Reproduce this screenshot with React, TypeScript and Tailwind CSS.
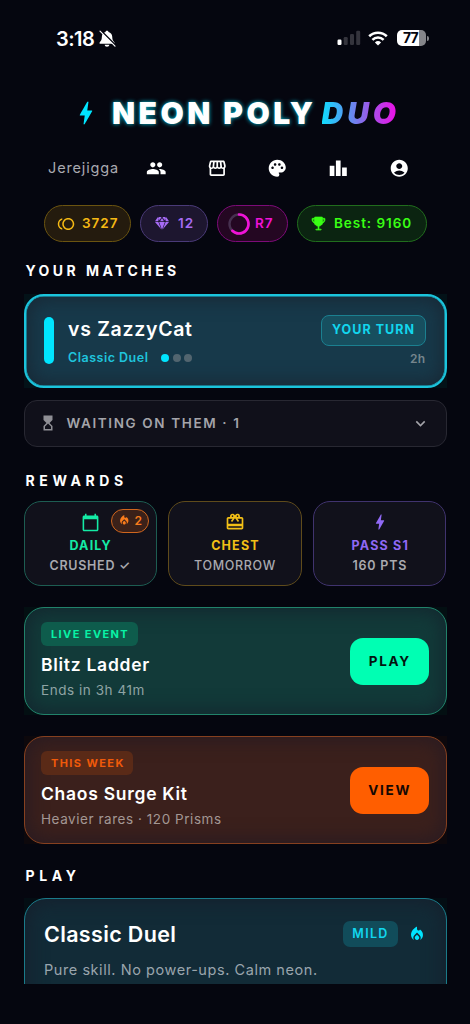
import type { ReactNode } from "react";
import {
  MdAccountCircle,
  MdBolt,
  MdCalendarToday,
  MdCardGiftcard,
  MdHourglassTop,
  MdKeyboardArrowDown,
  MdLeaderboard,
  MdLocalFireDepartment,
  MdOutlineStorefront,
  MdPalette,
  MdPeople,
  MdToll,
} from "react-icons/md";
import { IoTrophy } from "react-icons/io5";

function StatusBar() {
  return (
    <div className="flex h-[76px] items-center justify-between pl-[56px] pr-[41px] text-white">
      <div className="flex items-center gap-[5px] pt-[1px]">
        <span className="text-[20px] font-semibold tracking-[-0.5px]">3:18</span>
        <svg width="17" height="18" viewBox="0 0 17 18" aria-hidden="true">
          <path
            d="M8 .8c.9 0 1.4.5 1.5 1.2 2.4.6 3.6 2.3 3.7 4.6.1 3 .6 4.3 2.1 5.6.6.6.3 1.6-.6 1.6H1.4c-.9 0-1.2-1-.6-1.6 1.5-1.3 2-2.6 2.1-5.6C3 4.300 4.100 2.600 6.500 2 6.600 1.300 7.100.8 8 .8Z"
            fill="currentColor"
          />
          <path d="M5.700 14.800h4.700c-.2 1.200-1.100 2-2.400 2s-2.200-.8-2.300-2Z" fill="currentColor" />
          <path d="M2 .6 17 15.600" stroke="#05060f" strokeWidth="1.500" />
          <path d="M1 1.200 16 16.200" stroke="currentColor" strokeWidth="1.200" strokeLinecap="round" />
        </svg>
      </div>
      <div className="flex items-center">
        <svg width="24" height="16" viewBox="0 0 24 16" aria-hidden="true">
          <rect x="0.500" y="9.500" width="4" height="5.500" rx="1.200" fill="#fff" />
          <rect x="6.700" y="7" width="4" height="8" rx="1.200" fill="#34343c" />
          <rect x="13" y="4" width="4" height="11" rx="1.200" fill="#34343c" />
          <rect x="19.200" y="0.800" width="4" height="14.200" rx="1.200" fill="#34343c" />
        </svg>
        <svg className="ml-[7px]" width="20" height="15" viewBox="0 0 20 15" fill="none" aria-hidden="true">
          <path d="M1.200 5.300a12.700 12.700 0 0 1 17.600 0" stroke="#fff" strokeWidth="2.600" />
          <path d="M4.400 8.800a8 8 0 0 1 11.200 0" stroke="#fff" strokeWidth="2.500" />
          <path d="M10 14.600 6.900 11.500a4.500 4.500 0 0 1 6.200 0Z" fill="#fff" />
        </svg>
        <div className="ml-[9px] flex items-center">
          <div className="flex h-4 w-[29px] items-center rounded-[5px] bg-[linear-gradient(90deg,#fff_77%,#85858a_77%)] pl-[6px] text-[14px] font-bold leading-none tracking-[-0.8px] text-[#05060f]">
            77
          </div>
          <div className="ml-[1px] h-[5px] w-[2px] rounded-r-full bg-[#85858a]" />
        </div>
      </div>
    </div>
  );
}

function Logo() {
  return (
    <h1 className="flex h-[74px] items-center pl-[71px] text-[30px] font-black leading-none">
      <MdBolt className="h-[30px] w-[30px] shrink-0 text-[#00e5ff]" aria-hidden="true" />
      <span className="ml-[11px] whitespace-nowrap tracking-[3.500px] text-white [text-shadow:0_0_4px_#00c8e0]">
        NEON POLY
      </span>
      <span className="ml-[5px] bg-[linear-gradient(90deg,#0fdcfd,#8a68ea_52%,#ff00e5)] bg-clip-text pr-[2px] italic tracking-[4px] text-transparent">
        DUO
      </span>
    </h1>
  );
}

const navIcons = [MdPeople, MdOutlineStorefront, MdPalette, MdLeaderboard, MdAccountCircle];

function Nav() {
  return (
    <nav className="flex h-9 items-center pl-[48px] text-white">
      <span className="w-[98px] text-[14.500px] tracking-[0.850px] text-[#a9a9af]">Jerejigga</span>
      <div className="flex gap-[40.200px]">
        {navIcons.map((Icon, i) => (
          <Icon key={i} className="h-[20.500px] w-[20.500px]" />
        ))}
      </div>
    </nav>
  );
}

function Pill({ className, children }: { className: string; children: ReactNode }) {
  return (
    <div
      className={`flex h-[37px] items-center rounded-full border text-[13.500px] font-semibold tracking-[0.950px] ${className}`}
    >
      {children}
    </div>
  );
}

function Stats() {
  return (
    <div className="mt-[19px] flex gap-[9px] pl-[44px]">
      <Pill className="w-[87px] gap-[7px] border-[#6b5410] bg-[#241b0e] pl-[12px] text-[#f5b914]">
        <MdToll className="h-[18px] w-[18px]" />
        3727
      </Pill>
      <Pill className="w-[67.500px] gap-[9px] border-[#4a3a78] bg-[#1d162f] pl-[14px] text-[#a66bf5]">
        <svg width="14" height="13" viewBox="0 0 14 13" fill="currentColor" aria-hidden="true">
          <path d="M2.700.3 0 4.300h3.200L4 1.200ZM3.500 0h3L4.600 3.500ZM7.500 0h3L9.400 3.500ZM7 .9 8.900 4.300H5.100ZM11.300.3 14 4.300h-3.200L10 1.200Z" />
          <path d="M0 5h3.400l2.800 7.200ZM4.100 5h5.800L7 12.800ZM14 5h-3.400l-2.800 7.200Z" />
        </svg>
        12
      </Pill>
      <Pill className="w-[71.500px] gap-[5.500px] border-[#7d0b78] bg-[#240722] pl-[10px] text-[#f012d8]">
        <svg width="22" height="22" viewBox="0 0 22 22" fill="none" aria-hidden="true">
          <circle cx="11" cy="11" r="9.500" stroke="#46304f" strokeWidth="2.400" />
          <circle
            cx="11"
            cy="11"
            r="9.500"
            stroke="#f012d8"
            strokeWidth="2.600"
            strokeLinecap="round"
            strokeDasharray="37 60"
            transform="rotate(-90 11 11)"
          />
        </svg>
        R7
      </Pill>
      <Pill className="w-[129.500px] gap-[8px] border-[#216d1d] bg-[#0b2411] pl-[13px] text-[#39ff14]">
        <IoTrophy className="h-[15px] w-[15px]" stroke="currentColor" strokeWidth={20} />
        Best: 9160
      </Pill>
    </div>
  );
}

function SectionTitle({ className, children }: { className: string; children: ReactNode }) {
  return (
    <h2 className={`pl-[25.500px] text-[14px] font-bold leading-5 text-white ${className}`}>{children}</h2>
  );
}

function MatchCard() {
  return (
    <div className="mt-[13px] bg-[#031218]">
      <div className="flex h-[94px] rounded-[20px] border-2 border-[#1bc4dc] bg-[#17394a] pl-[18px] pr-[19px] shadow-[inset_0_0_0_0.5px_#1bc4dc,inset_0_0_18px_4px_#182936]">
        <div className="mt-[21px] h-[47px] w-[10px] rounded-full bg-[#00e5ff]" />
        <div className="ml-[14.500px] flex-1">
          <div className="mt-[21px] text-[19.500px] font-semibold leading-6 tracking-[0.700px] text-white">
            vs ZazzyCat
          </div>
          <div className="mt-[7px] flex items-center text-[12.500px] font-semibold leading-5 tracking-[0.500px] text-[#1fc4dc]">
            Classic Duel
            <span className="ml-[13px] flex gap-[3.500px]">
              <i className="h-2 w-2 rounded-full bg-[#00e5ff]" />
              <i className="h-2 w-2 rounded-full bg-[#52656f]" />
              <i className="h-2 w-2 rounded-full bg-[#52656f]" />
            </span>
          </div>
        </div>
        <div className="flex flex-col items-end">
          <div className="mt-[19px] flex h-[31px] w-[105px] items-center justify-center rounded-[8px] border border-[#1b8090] bg-[#174f5f] pl-[1px] text-[12.500px] font-bold tracking-[1.050px] text-[#12d6ee]">
            YOUR TURN
          </div>
          <span className="mt-[3px] text-[12px] font-semibold leading-5 tracking-[0.300px] text-[#75858d]">2h</span>
        </div>
      </div>
    </div>
  );
}

function WaitingRow() {
  return (
    <div className="mt-[12px] flex h-[46.500px] items-center rounded-[13px] border border-[#282832] bg-[#10101a] pl-[14px] pr-[16px] text-[#a4a4aa]">
      <MdHourglassTop className="h-[18px] w-[18px] text-[#8f8f95]" />
      <span className="ml-[10px] flex-1 text-[13.500px] font-semibold tracking-[1.620px]">WAITING ON THEM · 1</span>
      <MdKeyboardArrowDown className="h-[19px] w-[19px]" />
    </div>
  );
}

type RewardProps = {
  icon: ReactNode;
  title: string;
  note: string;
  className: string;
  noteClass?: string;
  children?: ReactNode;
};

function Reward({ icon, title, note, className, noteClass = "", children }: RewardProps) {
  return (
    <div
      className={`relative flex h-[85px] flex-1 flex-col items-center rounded-[17px] border bg-[#11111b] pt-[10px] ${className}`}
    >
      <span className="flex h-[21px] items-center">{icon}</span>
      <span className="mt-[3px] pl-[1px] text-[12.500px] font-bold leading-5 tracking-[1.200px]">{title}</span>
      <span className={`text-[12.500px] leading-5 text-[#a9a9af] ${noteClass}`}>{note}</span>
      {children}
    </div>
  );
}

function Rewards() {
  return (
    <div className="mt-[10px] flex gap-[11.500px]">
      <Reward
        icon={<MdCalendarToday className="h-[19px] w-[19px]" />}
        title="DAILY"
        note="CRUSHED ✓"
        noteClass="font-semibold tracking-[0.700px]"
        className="border-[#1d5d52] text-[#14eba5]"
      >
        <span className="absolute right-[7px] top-[7px] flex h-[24px] w-[37.500px] items-center justify-center gap-[4px] rounded-full border border-[#d0661e] bg-[#3b2119] text-[12px] font-semibold text-[#f97c1c]">
          <MdLocalFireDepartment className="h-[12.500px] w-[12.500px]" />2
        </span>
      </Reward>
      <Reward
        icon={<MdCardGiftcard className="h-[20px] w-[20px]" />}
        title="CHEST"
        note="TOMORROW"
        noteClass="font-medium tracking-[0.650px]"
        className="border-[#5f4b1b] text-[#f2bf16]"
      />
      <Reward
        icon={<MdBolt className="h-[20px] w-[20px]" />}
        title="PASS S1"
        note="160 PTS"
        noteClass="font-semibold tracking-[0.800px]"
        className="border-[#40336e] text-[#9069f5]"
      />
    </div>
  );
}

type PromoProps = {
  tag: string;
  title: string;
  note: string;
  action: string;
  wrapClass: string;
  cardClass: string;
  tagClass: string;
  buttonClass: string;
  noteClass: string;
};

function Promo({ tag, title, note, action, wrapClass, cardClass, tagClass, buttonClass, noteClass }: PromoProps) {
  return (
    <div className={wrapClass}>
      <div
        className={`flex h-[108px] items-center justify-between rounded-[20px] border pl-[16.500px] pr-[16.500px] pt-[1px] ${cardClass}`}
      >
        <div className="flex flex-col items-start">
          <span
            className={`flex h-[23.500px] items-center rounded-[6px] pl-[10px] pr-[8.500px] text-[11px] font-bold tracking-[1.400px] ${tagClass}`}
          >
            {tag}
          </span>
          <span className="mt-[7.500px] text-[17.500px] font-semibold leading-6 tracking-[0.720px] text-white">
            {title}
          </span>
          <span className={`mt-[3px] text-[13.500px] leading-5 tracking-[0.550px] ${noteClass}`}>{note}</span>
        </div>
        <button
          className={`h-[47px] w-[79.500px] rounded-[13px] pl-[1px] text-[13.500px] font-bold tracking-[1.700px] ${buttonClass}`}
        >
          {action}
        </button>
      </div>
    </div>
  );
}

function ModeCard() {
  return (
    <div className="mt-[12px] bg-[#030d13]">
      <div className="h-[150px] rounded-[22px] border border-[#1a7b8a] bg-[#122b37] pl-[19.500px] pr-[20px] pt-[21px] shadow-[inset_0_0_18px_4px_#15212e]">
        <div className="flex h-[28px] items-center">
          <span className="flex-1 pt-[1px] text-[21.500px] font-semibold tracking-[0.350px] text-white">
            Classic Duel
          </span>
          <span className="flex h-[26px] w-[55px] items-center justify-center rounded-[7px] bg-[#114c5a] pl-[1px] pt-[1px] text-[12.500px] font-semibold tracking-[1.300px] text-[#12d6ee]">
            MILD
          </span>
          <MdLocalFireDepartment className="ml-[10px] h-[18px] w-[18px] text-[#00e5ff]" />
        </div>
        <p className="mt-[10px] text-[14.500px] leading-6 tracking-[0.560px] text-[#9aa5ad]">
          Pure skill. No power-ups. Calm neon.
        </p>
      </div>
    </div>
  );
}

export default function App() {
  return (
    <div className="h-[1024px] w-[470px] bg-[#05060f] font-[Inter,'Liberation_Sans',sans-serif]">
      <div className="h-[984px] overflow-hidden">
        <StatusBar />
        <Logo />
        <Nav />
        <Stats />
        <SectionTitle className="mt-[19px] tracking-[3.450px]">YOUR MATCHES</SectionTitle>
        <div className="px-[23.500px]">
          <MatchCard />
          <WaitingRow />
        </div>
        <SectionTitle className="mt-[24px] tracking-[4.600px]">REWARDS</SectionTitle>
        <div className="px-[23.500px]">
          <Rewards />
          <Promo
            tag="LIVE EVENT"
            title="Blitz Ladder"
            note="Ends in 3h 41m"
            action="PLAY"
            wrapClass="mt-[21px] bg-[#030f12]"
            cardClass="border-[#21826a] bg-[#123a39] shadow-[inset_0_0_18px_4px_#13282f]"
            tagClass="bg-[#0e5c4c] text-[#08f2a6]"
            buttonClass="bg-[#00ffb3] text-[#04140f]"
            noteClass="text-[#8fa3a4]"
          />
          <Promo
            tag="THIS WEEK"
            title="Chaos Surge Kit"
            note="Heavier rares · 120 Prisms"
            action="VIEW"
            wrapClass="mt-[21px] bg-[#0d080c]"
            cardClass="border-[#86401f] bg-[#3b201c] shadow-[inset_0_0_18px_4px_#2a1b21]"
            tagClass="bg-[#5a2a17] text-[#f05a0a]"
            buttonClass="bg-[#ff5e00] text-[#160803]"
            noteClass="text-[#a39794]"
          />
        </div>
        <SectionTitle className="mt-[22px] tracking-[4.600px]">PLAY</SectionTitle>
        <div className="px-[23.500px]">
          <ModeCard />
        </div>
      </div>
    </div>
  );
}
